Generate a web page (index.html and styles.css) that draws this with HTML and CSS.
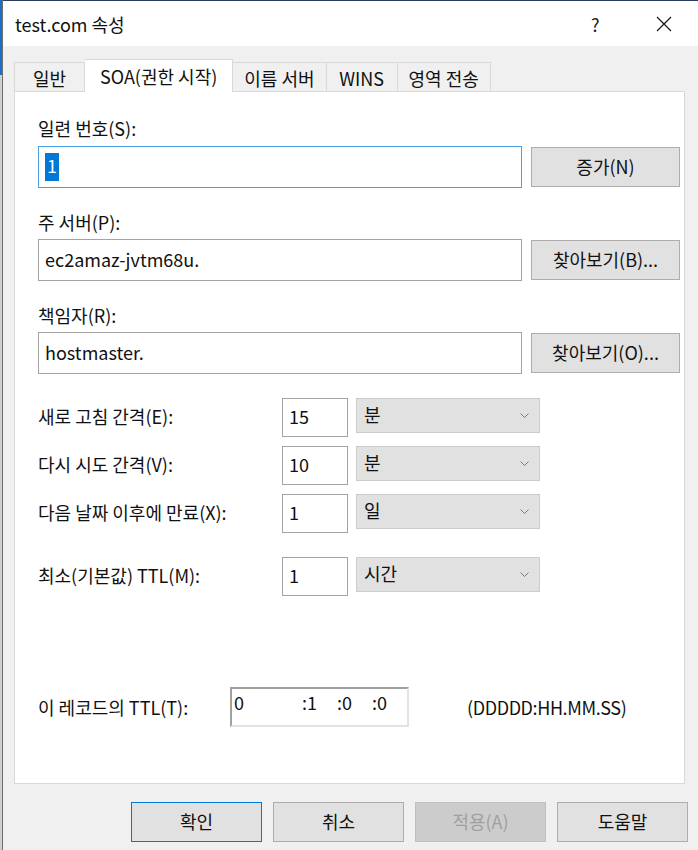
FILE: index.html
```html
<!doctype html>
<html>
  <head>
    <meta charset=utf-8>
    <title>test.com 속성</title>
    <link rel="stylesheet" href="styles.css">
  </head>
  <body>
    <div class=window>
      <div class=titlebar>
        <span class=title>test.com 속성</span>
        <span class=help>?</span>
        <span class=close>
          <svg width=16 height=16 viewBox="0 0 16 16"><path d="M1 1L15 15M15 1L1 15" stroke="#111" stroke-width="1.1" fill="none"/></svg>
        </span>
      </div>

      <div class=client>
        <div class=tabs>
          <div class=tab>일반</div>
          <div class="tab selected">SOA(권한 시작)</div>
          <div class=tab>이름 서버</div>
          <div class=tab>WINS</div>
          <div class=tab>영역 전송</div>
        </div>

        <div class=panel>
          <div class="label first">일련 번호(S):</div>
          <div class=field-row>
            <div class="textbox focus"><span class=sel>1</span></div>
            <div class=btn>증가(N)</div>
          </div>

          <div class=label>주 서버(P):</div>
          <div class=field-row>
            <div class=textbox>ec2amaz-jvtm68u.</div>
            <div class=btn>찾아보기(B)...</div>
          </div>

          <div class=label>책임자(R):</div>
          <div class=field-row>
            <div class=textbox>hostmaster.</div>
            <div class=btn>찾아보기(O)...</div>
          </div>

          <div class=intervals>
            <div class=row>
              <div class=row-label>새로 고침 간격(E):</div>
              <div class=numbox>15</div>
              <div class=combo><span>분</span><svg class=chev width=9 height=5 viewBox="0 0 9 5"><path d="M0.5 0.5L4.5 4.5L8.5 0.5" stroke="#7a7a7a" fill="none"/></svg></div>
            </div>
            <div class=row>
              <div class=row-label>다시 시도 간격(V):</div>
              <div class=numbox>10</div>
              <div class=combo><span>분</span><svg class=chev width=9 height=5 viewBox="0 0 9 5"><path d="M0.5 0.5L4.5 4.5L8.5 0.5" stroke="#7a7a7a" fill="none"/></svg></div>
            </div>
            <div class=row>
              <div class=row-label>다음 날짜 이후에 만료(X):</div>
              <div class=numbox>1</div>
              <div class=combo><span>일</span><svg class=chev width=9 height=5 viewBox="0 0 9 5"><path d="M0.5 0.5L4.5 4.5L8.5 0.5" stroke="#7a7a7a" fill="none"/></svg></div>
            </div>
            <div class="row spaced">
              <div class=row-label>최소(기본값) TTL(M):</div>
              <div class=numbox>1</div>
              <div class=combo><span>시간</span><svg class=chev width=9 height=5 viewBox="0 0 9 5"><path d="M0.5 0.5L4.5 4.5L8.5 0.5" stroke="#7a7a7a" fill="none"/></svg></div>
            </div>
          </div>

          <div class=ttl-row>
            <div class=ttl-label>이 레코드의 TTL(T):</div>
            <div class=ttl-box>
              <span class=t-days>0</span>
              <span class=t-part>:1</span>
              <span class=t-part>:0</span>
              <span class=t-part>:0</span>
            </div>
            <div class=ttl-hint>(DDDDD:HH.MM.SS)</div>
          </div>
        </div>

        <div class=actions>
          <div class="btn action default">확인</div>
          <div class="btn action">취소</div>
          <div class="btn action disabled">적용(A)</div>
          <div class="btn action">도움말</div>
        </div>
      </div>
    </div>
  </body>
</html>
```

FILE: styles.css
```css
html, body {
  margin: 0;
  height: 100%;
}
body {
  font-family: 'Noto Sans CJK KR', 'Noto Sans', sans-serif;
  font-size: 18px;
  color: #111;
  background: linear-gradient(to bottom, #1b6fc8 75px, #cfcfcf 75px);
  padding-left: 2px;
  box-sizing: border-box;
  overflow: hidden;
}

.window {
  height: 100%;
  border-left: 1px solid #6e6e6e;
  background: #f0f0f0;
}

.titlebar {
  height: 45px;
  border-top: 1px solid #2b3d5c;
  background: #fff;
  display: flex;
  align-items: center;
  padding-left: 12px;
}
.title { flex: 1; line-height: 22px; }
.help {
  font-size: 18px;
  line-height: 22px;
  width: 65px;
  color: #222;
}
.close {
  width: 42px;
  display: flex;
  align-items: center;
}

/* tabs */
.tabs {
  display: flex;
  align-items: flex-end;
  margin-top: 13px;
  padding-left: 11px;
  height: 32px;
}
.tab {
  box-sizing: border-box;
  min-width: 71px;
  text-align: center;
  height: 29px;
  line-height: 30px;
  padding: 0 11px;
  border: 1px solid #d9d9d9;
  border-bottom: none;
  border-left: none;
  background: #f0f0f0;
}
.tab:first-child { border-left: 1px solid #d9d9d9; }
.tab.selected {
  height: 33px;
  line-height: 32px;
  background: #fff;
  margin-bottom: -1px;
  position: relative;
  z-index: 1;
  padding: 0 15px;
}

.panel {
  box-sizing: border-box;
  height: 693px;
  margin: 0 13px 0 11px;
  border: 1px solid #d9d9d9;
  background: #fff;
  padding-left: 23px;
}

.label {
  line-height: 22px;
  margin-top: 23px;
}
.label.first { margin-top: 25px; }

.field-row {
  display: flex;
  align-items: center;
  margin-top: 6px;
  line-height: 22px;
}
.label.first + .field-row { margin-top: 7px; }

.textbox {
  box-sizing: border-box;
  width: 484px;
  height: 42px;
  border: 1px solid #a3a3a3;
  padding: 0 0 3px 6px;
  display: flex;
  align-items: center;
}
.textbox.focus { border-color: #4a9ee6; padding-bottom: 0; }
.sel {
  background: #0078d7;
  color: #fff;
  padding: 2px 2px 6px;
  line-height: 20px;
}

.btn {
  box-sizing: border-box;
  height: 40px;
  border: 1px solid #adadad;
  background: #e1e1e1;
  display: flex;
  align-items: center;
  justify-content: center;
  line-height: 22px;
  padding-bottom: 2px;
}
.field-row .btn {
  width: 149px;
  margin-left: 9px;
}

/* interval rows */
.intervals { margin-top: 24px; }
.row {
  display: grid;
  grid-template-columns: 236px 66px 184px;
  column-gap: 8px;
  align-items: start;
  margin-top: 9px;
}
.row:first-child { margin-top: 0; }
.row.spaced { margin-top: 24px; }
.row-label {
  line-height: 36px;
  height: 39px;
}
.numbox {
  box-sizing: border-box;
  height: 39px;
  border: 1px solid #a3a3a3;
  padding: 0 0 4px 6px;
  display: flex;
  align-items: center;
  line-height: 22px;
}
.combo {
  box-sizing: border-box;
  height: 35px;
  border: 1px solid #cccccc;
  background: #e1e1e1;
  display: flex;
  align-items: center;
  justify-content: space-between;
  padding: 0 10px 3px 7px;
  line-height: 22px;
}
.chev { margin-top: 3px; }

/* record ttl */
.ttl-row {
  display: flex;
  align-items: center;
  margin-top: 91px;
  height: 40px;
  line-height: 22px;
}
.ttl-label { width: 192px; }
.ttl-box {
  box-sizing: border-box;
  width: 179px;
  height: 40px;
  border: 2px solid #e3e3e3;
  border-top-color: #a0a0a0;
  border-left-color: #a0a0a0;
  display: flex;
  align-items: flex-start;
  padding-top: 3px;
  line-height: 20px;
}
.t-days { width: 70px; padding-left: 2px; }
.t-part { width: 36px; }
.ttl-hint {
  margin-left: 58px;
  letter-spacing: -0.4px;
}

.actions {
  display: flex;
  justify-content: flex-end;
  gap: 11px;
  margin-top: 18px;
  padding-right: 10px;
}
.btn.action { width: 131px; }
.btn.default { border-color: #0078d7; }
.btn.disabled {
  background: #cccccc;
  border-color: #bfbfbf;
  color: #a0a0a0;
}
```
